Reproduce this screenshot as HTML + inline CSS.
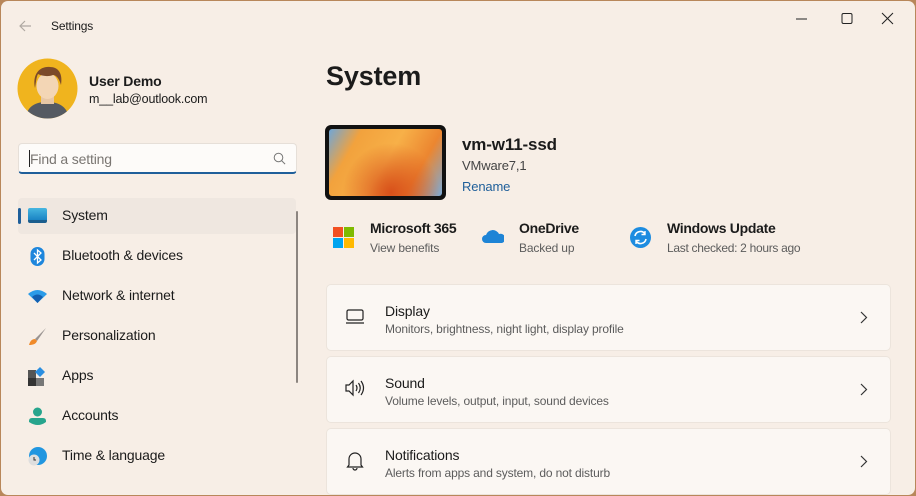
<!DOCTYPE html>
<html><head><meta charset="utf-8"><style>
*{margin:0;padding:0;box-sizing:border-box}
body{width:916px;height:496px;overflow:hidden;background:#b8875a;font-family:"Segoe UI","Liberation Sans",sans-serif;color:#1b1b1b;letter-spacing:-0.15px}
.win{position:absolute;left:1px;top:1px;width:914px;height:494px;background:#f7eee6;border-radius:7px;overflow:hidden}
.a{position:absolute;white-space:nowrap}
.nav{position:absolute;left:17px;width:278px;height:36px;font-size:14px}
.nav span{position:absolute;left:44px;top:9px}
.nav .ic{position:absolute;left:10px;top:9px;width:19px;height:19px}
.card{position:absolute;left:325px;width:565px;height:67px;background:#fbf7f3;border:1px solid #ece4dc;border-radius:5px}
.card .t{position:absolute;left:58px;top:18px;font-size:14px}
.card .s{position:absolute;left:58px;top:37px;font-size:12px;color:#5c5c5c}
.card .chev{position:absolute;left:533px;top:26px}
.card svg.i{position:absolute;left:18px;top:22px}
</style></head><body><div class="win">
<svg class="a" style="left:17px;top:18px" width="14" height="14" viewBox="0 0 14 14"><path d="M13 7H2M7 2L2 7l5 5" stroke="#b0a9a2" stroke-width="1.2" fill="none"/></svg>
<div class="a" style="left:50px;top:18px;font-size:12px">Settings</div>
<svg class="a" style="left:795px;top:11px" width="100" height="14"><path d="M0 7h11" stroke="#222"/><rect x="46" y="1.5" width="10" height="10" rx="1.5" fill="none" stroke="#222"/><path d="M86 1l11 11M97 1L86 12" stroke="#222"/></svg>
<svg class="a" style="left:16px;top:57px" width="61" height="61" viewBox="0 0 61 61"><defs><clipPath id="c"><circle cx="30.5" cy="30.5" r="30"/></clipPath></defs><circle cx="30.5" cy="30.5" r="30" fill="#f0b41e"/><g clip-path="url(#c)"><path d="M8 62c2-14 10-18 22-18s20 4 23 18z" fill="#555a62"/><rect x="24" y="36" width="13" height="10" fill="#e7c7a5"/><ellipse cx="30.5" cy="28" rx="11" ry="13" fill="#f3d6b5"/><path d="M18 30c-3-14 5-22 15-21 8 0 13 6 11 18-2-7-5-10-8-10-5 2-11 1-15-1-2 4-2 9-3 14z" fill="#7b4a2a"/></g></svg>
<div class="a" style="left:88px;top:72px;font-size:14px;font-weight:bold">User Demo</div>
<div class="a" style="left:88px;top:91px;font-size:12.5px">m__lab@outlook.com</div>
<div class="a" style="left:17px;top:142px;width:279px;height:31px;background:#fdfbf9;border:1px solid #e6dfd8;border-bottom:2px solid #1f5f9a;border-radius:4px"></div>
<div class="a" style="left:28px;top:149px;width:1px;height:17px;background:#222"></div>
<div class="a" style="left:29px;top:150px;font-size:14px;color:#7a7672">Find a setting</div>
<svg class="a" style="left:272px;top:151px" width="13" height="13"><circle cx="5.5" cy="5.5" r="4.3" fill="none" stroke="#777"/><path d="M8.6 8.6l3.5 3.5" stroke="#777"/></svg>
<div class="a" style="left:295px;top:210px;width:2px;height:172px;background:#8c8580;border-radius:1px"></div>
<div class="nav" style="top:197px;background:#efe7e0;border-radius:4px"><div class="a" style="left:0;top:10px;width:3px;height:16px;background:#1f5f9a;border-radius:2px"></div><div class="ic" style="top:10px;height:15px;width:19px;background:linear-gradient(#46b6e0,#1a84c4);border-radius:2px;border-bottom:3px solid #1b5e8e"></div><span>System</span></div>
<div class="nav" style="top:237px"><svg class="ic" viewBox="0 0 19 19"><rect x="2.5" y="0" width="14" height="19" rx="7" fill="#1e86dc"/><path d="M6 6l7 7-3.5 3V3l3.5 3-7 7" stroke="#fff" stroke-width="1.3" fill="none"/></svg><span>Bluetooth &amp; devices</span></div>
<div class="nav" style="top:277px"><svg class="ic" viewBox="0 0 19 19"><path d="M0 7q9.5-8 19 0l-9.5 9z" fill="#2b9be8"/><path d="M4 10q5.5-5 11 0l-5.5 6z" fill="#135fb0"/></svg><span>Network &amp; internet</span></div>
<div class="nav" style="top:317px"><svg class="ic" viewBox="0 0 19 19"><path d="M18 1L7 12l2 2z" fill="#9a9391"/><path d="M7 12c-3 0-5 2-6 6 4 0 7-1 8-4z" fill="#f08a2a"/></svg><span>Personalization</span></div>
<div class="nav" style="top:357px"><svg class="ic" viewBox="0 0 19 19"><rect x="0" y="3" width="8" height="8" fill="#555"/><rect x="0" y="11" width="8" height="8" fill="#333"/><rect x="8" y="11" width="8" height="8" fill="#777"/><path d="M12 0l5 5-5 5-5-5z" fill="#2a8ee0"/></svg><span>Apps</span></div>
<div class="nav" style="top:397px"><svg class="ic" viewBox="0 0 19 19"><circle cx="9.5" cy="5" r="4.5" fill="#27a58d"/><path d="M1 14q0-3 3-3h11q3 0 3 3v1q-8 6-17 0z" fill="#27a58d"/></svg><span>Accounts</span></div>
<div class="nav" style="top:437px"><svg class="ic" viewBox="0 0 19 19"><circle cx="10" cy="9" r="9" fill="#2196e0"/><circle cx="6" cy="13" r="5.5" fill="#dedede"/><path d="M6 10v3h2" stroke="#333" fill="none"/></svg><span>Time &amp; language</span></div>
<div class="a" style="left:325px;top:60px;font-size:27px;font-weight:600">System</div>
<div class="a" style="left:324px;top:124px;width:121px;height:75px;background:#111;border-radius:6px;padding:4px"><div style="width:100%;height:100%;border-radius:3px;background:radial-gradient(ellipse at 55% 95%,#d8501a,transparent 55%),linear-gradient(120deg,#6fa6d8 0%,#f2a23d 22%,#f7b048 50%,#ec8630 75%,#7ba9d6 100%)"></div></div>
<div class="a" style="left:461px;top:134px;font-size:17px;font-weight:600">vm-w11-ssd</div>
<div class="a" style="left:461px;top:157px;font-size:13px;color:#444">VMware7,1</div>
<div class="a" style="left:461px;top:178px;font-size:13px;color:#1f5f9a">Rename</div>
<svg class="a" style="left:332px;top:226px" width="21" height="21"><rect x="0" y="0" width="10" height="10" fill="#f25022"/><rect x="11" y="0" width="10" height="10" fill="#7fba00"/><rect x="0" y="11" width="10" height="10" fill="#00a4ef"/><rect x="11" y="11" width="10" height="10" fill="#ffb900"/></svg>
<div class="a" style="left:369px;top:219px;font-size:14px;font-weight:600;letter-spacing:-0.3px">Microsoft 365</div>
<div class="a" style="left:369px;top:240px;font-size:12px;color:#5c5c5c">View benefits</div>
<svg class="a" style="left:481px;top:228px" width="22" height="15"><path d="M4 14a4 4 0 010-8 7 7 0 0113-1 4.5 4.5 0 013 9z" fill="#1e84d6"/></svg>
<div class="a" style="left:518px;top:219px;font-size:14px;font-weight:600;letter-spacing:-0.3px">OneDrive</div>
<div class="a" style="left:518px;top:240px;font-size:12px;color:#5c5c5c">Backed up</div>
<svg class="a" style="left:629px;top:226px" width="21" height="21"><circle cx="10.5" cy="10.5" r="10.5" fill="#1d8ce0"/><path d="M5 9a5.5 5.5 0 0110-2M16 12a5.5 5.5 0 01-10 2" stroke="#fff" stroke-width="1.6" fill="none"/><path d="M15 4v3.5h-3.5M6 17v-3.5h3.5" stroke="#fff" stroke-width="1.4" fill="none"/></svg>
<div class="a" style="left:666px;top:219px;font-size:14px;font-weight:600;letter-spacing:-0.3px">Windows Update</div>
<div class="a" style="left:666px;top:240px;font-size:12px;color:#5c5c5c;letter-spacing:-0.3px">Last checked: 2 hours ago</div>
<div class="card" style="top:283px"><svg class="i" width="20" height="18"><rect x="2" y="3" width="16" height="10" rx="1.5" fill="none" stroke="#222" stroke-width="1.2"/><path d="M1 16h18" stroke="#222" stroke-width="1.2"/></svg><div class="t">Display</div><div class="s">Monitors, brightness, night light, display profile</div><svg class="chev" width="8" height="13"><path d="M1 1l5.5 5.5L1 12" stroke="#333" fill="none" stroke-width="1.2"/></svg></div>
<div class="card" style="top:355px"><svg class="i" width="20" height="18"><path d="M1 6h3l4-4v14l-4-4H1z" fill="none" stroke="#222" stroke-width="1.2"/><path d="M11 6q2 3 0 6M13.5 4q3.5 5 0 10M16 2q5 7 0 14" fill="none" stroke="#222" stroke-width="1.2"/></svg><div class="t">Sound</div><div class="s">Volume levels, output, input, sound devices</div><svg class="chev" width="8" height="13"><path d="M1 1l5.5 5.5L1 12" stroke="#333" fill="none" stroke-width="1.2"/></svg></div>
<div class="card" style="top:427px"><svg class="i" width="20" height="20"><path d="M4 14V8a6 6 0 0112 0v6l1.5 2h-15z" fill="none" stroke="#222" stroke-width="1.2"/><path d="M8 17a2 2 0 004 0" fill="none" stroke="#222" stroke-width="1.2"/></svg><div class="t">Notifications</div><div class="s">Alerts from apps and system, do not disturb</div><svg class="chev" width="8" height="13"><path d="M1 1l5.5 5.5L1 12" stroke="#333" fill="none" stroke-width="1.2"/></svg></div>
</div></body></html>
